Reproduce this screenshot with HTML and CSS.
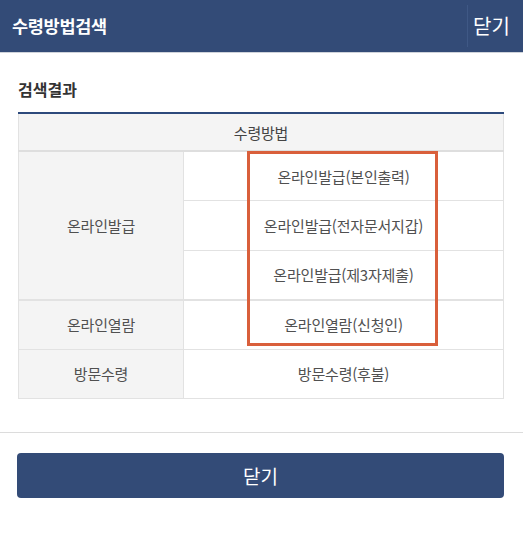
FILE: index.html
```html
<!DOCTYPE html>
<html lang="ko">
<head>
<meta charset="utf-8">
<title>수령방법검색</title>
<link rel="stylesheet" href="styles.css">
</head>
<body>
<header class="topbar">
  <h1 class="topbar-title">수령방법검색</h1>
  <button class="topbar-close" type="button">닫기</button>
</header>
<main class="content">
  <h2 class="section-title">검색결과</h2>
  <div class="table-wrap">
    <table class="result-table">
      <thead>
        <tr><th colspan="2">수령방법</th></tr>
      </thead>
      <tbody>
        <tr>
          <th rowspan="3" class="label">온라인발급</th>
          <td>온라인발급(본인출력)</td>
        </tr>
        <tr><td>온라인발급(전자문서지갑)</td></tr>
        <tr class="group-end"><td>온라인발급(제3자제출)</td></tr>
        <tr class="group-start">
          <th class="label">온라인열람</th>
          <td>온라인열람(신청인)</td>
        </tr>
        <tr>
          <th class="label">방문수령</th>
          <td>방문수령(후불)</td>
        </tr>
      </tbody>
    </table>
    <div class="highlight"></div>
  </div>
</main>
<div class="divider"></div>
<div class="footer">
  <button class="close-btn" type="button">닫기</button>
</div>
</body>
</html>
```

FILE: styles.css
```css
* { box-sizing: border-box; }
html, body { margin: 0; padding: 0; background: #fff; }
body {
  font-family: "Noto Sans CJK KR", "Noto Sans", sans-serif;
  color: #555;
}
.topbar {
  height: 53px;
  background: #334b77;
  border-bottom: 1px solid #cfd3da;
  display: flex;
  align-items: center;
  justify-content: space-between;
  padding-left: 12px;
}
.topbar-title {
  margin: 0;
  font-size: 17.5px;
  font-weight: 700;
  color: #fff;
  line-height: 24px;
  letter-spacing: -0.3px;
}
.topbar-close {
  background: none;
  border: 0;
  border-left: 1px solid #3f5885;
  height: 42px;
  width: 56px;
  padding: 0 0 0 5px;
  color: #fff;
  font-family: inherit;
  font-size: 20px;
  line-height: 42px;
  text-align: left;
}
.content {
  padding: 0 19px 0 18px;
}
.section-title {
  margin: 24px 0 11px;
  font-size: 16px;
  line-height: 24px;
  font-weight: 700;
  color: #333;
}
.table-wrap { position: relative; }
.result-table {
  width: 100%;
  border-collapse: collapse;
  border-top: 2px solid #2d4a7c;
  font-size: 15px;
  letter-spacing: -0.2px;
}
.result-table th,
.result-table td {
  border: 1px solid #e2e2e2;
  text-align: center;
  font-weight: 400;
  height: 49.5px;
  padding: 0;
  color: #505050;
}
.result-table thead th {
  background: #f4f4f4;
  height: 38px;
  border-bottom: 2px solid #dedede;
  color: #444;
}
.result-table th.label {
  background: #f4f4f4;
  width: 165px;
}
.result-table tr.group-end td,
.result-table tr.group-end th { border-bottom: 2px solid #e2e2e2; }
.result-table tr.group-start td,
.result-table tr.group-start th { border-top: 2px solid #e2e2e2; }
.highlight {
  position: absolute;
  left: 229px;
  top: 39px;
  width: 191px;
  height: 195px;
  border: 3px solid #d95f3b;
  pointer-events: none;
}
.divider {
  margin-top: 33px;
  border-top: 1px solid #dcdcdc;
}
.footer {
  padding: 20px 19px 0 17px;
}
.close-btn {
  display: block;
  width: 100%;
  height: 45px;
  background: #334b77;
  border: 0;
  border-radius: 4px;
  color: #fff;
  font-family: inherit;
  font-size: 19px;
}
```
